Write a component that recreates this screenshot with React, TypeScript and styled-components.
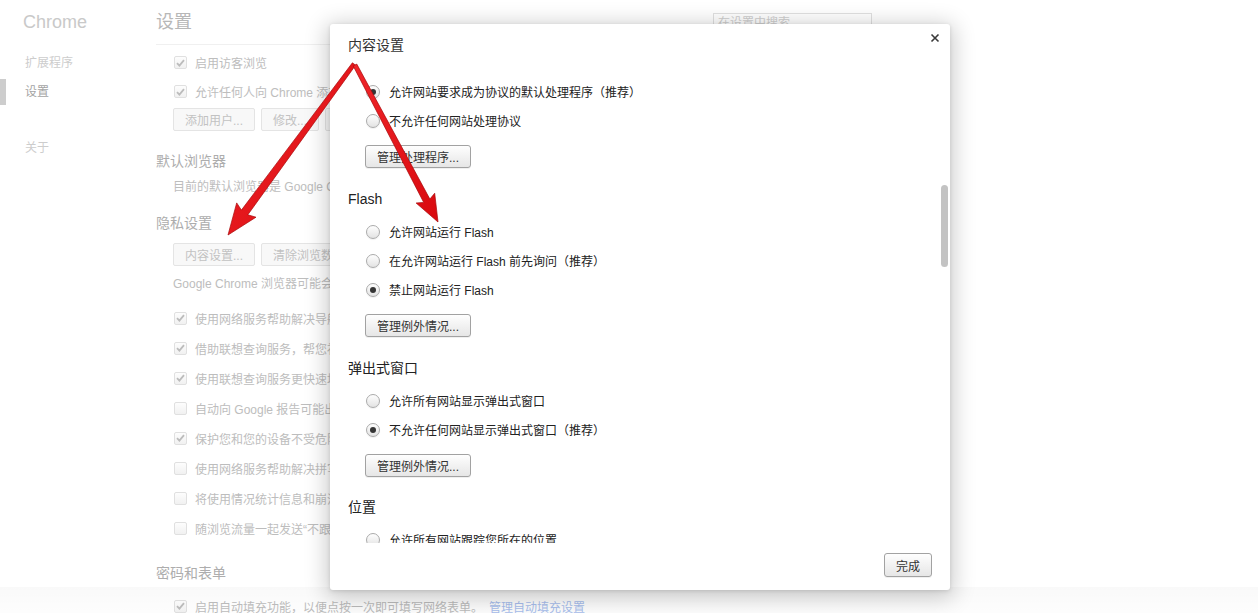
import React from "react";
import styled, { createGlobalStyle } from "styled-components";

const FONT = `"Liberation Sans", "Noto Sans CJK SC", sans-serif`;

const GlobalStyle = createGlobalStyle`
  html, body { margin: 0; padding: 0; background: #fff; }
  body { font-family: ${FONT}; overflow: hidden; }
  button { font-family: ${FONT}; }
`;

const Page = styled.div`
  position: relative;
  width: 1258px;
  height: 613px;
  overflow: hidden;
  display: flex;
  background: #fff;
`;

/* ---------- sidebar ---------- */
const Sidebar = styled.nav`
  width: 156px;
  flex: none;
  display: flex;
  flex-direction: column;
`;

const Brand = styled.div`
  height: 44px;
  line-height: 44px;
  padding-left: 23px;
  font-size: 18px;
  color: #c9c9c9;
`;

const NavItem = styled.div<{ $active?: boolean; $mt: number }>`
  height: 26px;
  line-height: 26px;
  margin-top: ${(p) => p.$mt}px;
  padding-left: 19px;
  border-left: 6px solid ${(p) => (p.$active ? "#cdcdcd" : "transparent")};
  font-size: 12px;
  color: ${(p) => (p.$active ? "#a4a4a4" : "#cdcdcd")};
`;

/* ---------- main settings page ---------- */
const Main = styled.main`
  width: 716px;
  flex: none;
  display: flex;
  flex-direction: column;
`;

const Header = styled.header`
  height: 44px;
  display: flex;
  align-items: flex-start;
  justify-content: space-between;
  border-bottom: 1px solid #f0f0f0;
`;

const PageTitle = styled.h1`
  margin: 0;
  font-size: 18px;
  font-weight: normal;
  line-height: 44px;
  color: #b7b7b7;
`;

const Search = styled.div`
  margin-top: 13px;
  width: 159px;
  height: 20px;
  box-sizing: border-box;
  border: 1px solid #e0e0e0;
  padding-left: 4px;
  font-size: 12px;
  line-height: 18px;
  color: #cfcfcf;
`;

const Heading = styled.h3<{ $mt: number }>`
  margin: ${(p) => p.$mt}px 0 0;
  height: 20px;
  line-height: 20px;
  font-size: 14px;
  font-weight: normal;
  color: #adadad;
  white-space: nowrap;
`;

const Body = styled.div<{ $mt: number; $flush?: boolean }>`
  margin-top: ${(p) => p.$mt}px;
  padding-left: ${(p) => (p.$flush ? 0 : 17)}px;
  display: flex;
  flex-direction: column;
  align-items: flex-start;
`;

const CheckRow = styled.div<{ $h: number }>`
  height: ${(p) => p.$h}px;
  display: flex;
  align-items: center;
  gap: 8px;
  font-size: 12px;
  color: #bdbdbd;
  white-space: nowrap;
`;

const Box = styled.span`
  width: 13px;
  height: 13px;
  box-sizing: border-box;
  margin-left: 1px;
  border: 1px solid #e0e0e0;
  border-radius: 2px;
  background: linear-gradient(#fdfdfd, #f1f1f1);
  display: flex;
  align-items: center;
  justify-content: center;
  flex: none;
`;

const Text = styled.div<{ $mt: number }>`
  margin-top: ${(p) => p.$mt}px;
  line-height: 20px;
  font-size: 12px;
  color: #bdbdbd;
  white-space: nowrap;
`;

const Link = styled.span`
  color: #a9bfee;
  margin-left: 6px;
`;

const ButtonRow = styled.div<{ $mt: number }>`
  margin-top: ${(p) => p.$mt}px;
  display: flex;
  gap: 6px;
`;

const BgButton = styled.button`
  height: 23px;
  padding: 0 11px;
  border: 1px solid #e4e4e4;
  border-radius: 2px;
  background: #f8f8f8;
  color: #c2c2c2;
  font-size: 12px;
  white-space: nowrap;
`;

/* ---------- dialog ---------- */
const Dialog = styled.section`
  position: absolute;
  left: 330px;
  top: 24px;
  width: 620px;
  height: 566px;
  background: #fff;
  border-radius: 3px;
  box-shadow: 0 4px 22px 4px rgba(0, 0, 0, 0.2), 0 1px 4px rgba(0, 0, 0, 0.12);
  display: flex;
  flex-direction: column;
  color: #333;
  z-index: 2;
`;

const DialogHeader = styled.div`
  height: 41px;
  flex: none;
  display: flex;
  justify-content: space-between;
  padding: 0 9px 0 18px;
`;

const DialogTitle = styled.h2`
  margin: 0;
  font-size: 14px;
  font-weight: normal;
  line-height: 42px;
  color: #333;
`;

const CloseButton = styled.button`
  margin-top: 8px;
  width: 12px;
  height: 12px;
  padding: 0;
  border: none;
  background: none;
  display: flex;
  align-items: center;
  justify-content: center;
`;

const DialogContent = styled.div`
  position: relative;
  height: 478px;
  flex: none;
  overflow: hidden;
`;

const ScrollInner = styled.div`
  margin-top: -21px;
  padding-left: 18px;
  display: flex;
  flex-direction: column;
`;

const SectionTitle = styled.h3<{ $mt: number }>`
  margin: ${(p) => p.$mt}px 0 0;
  height: 20px;
  line-height: 20px;
  font-size: 14px;
  font-weight: normal;
  color: #222;
`;

const RadioList = styled.div<{ $mt?: number }>`
  margin-top: ${(p) => p.$mt ?? 8}px;
  padding-left: 18px;
  display: flex;
  flex-direction: column;
`;

const RadioRow = styled.label`
  height: 29px;
  display: flex;
  align-items: center;
  gap: 9px;
  font-size: 12px;
  color: #222;
  white-space: nowrap;
`;

const Radio = styled.span<{ $checked?: boolean }>`
  width: 14px;
  height: 14px;
  box-sizing: border-box;
  border-radius: 50%;
  border: 1px solid #ababab;
  background: linear-gradient(#fefefe, #e3e3e3);
  box-shadow: 0 1px 1px rgba(0, 0, 0, 0.06);
  display: flex;
  align-items: center;
  justify-content: center;
  flex: none;
  &::after {
    content: "";
    width: 6px;
    height: 6px;
    border-radius: 50%;
    background: #353535;
    display: ${(p) => (p.$checked ? "block" : "none")};
  }
`;

const DlgButton = styled.button<{ $indent?: boolean }>`
  align-self: flex-start;
  margin: ${(p) => (p.$indent ? "10px 0 0 17px" : "0")};
  height: 23px;
  padding: 0 11px;
  border: 1px solid #a2a2a2;
  border-radius: 3px;
  background: linear-gradient(#fefefe, #e6e6e6);
  box-shadow: 0 1px 0 rgba(0, 0, 0, 0.06);
  color: #333;
  font-size: 12px;
  white-space: nowrap;
`;

const Scrollbar = styled.div`
  position: absolute;
  right: 2px;
  top: 120px;
  width: 7px;
  height: 82px;
  border-radius: 4px;
  background: #c3c3c3;
`;

const DialogFooter = styled.div`
  flex: 1;
  display: flex;
  justify-content: flex-end;
  align-items: flex-start;
  padding: 10px 18px 0 0;
`;

const DoneButton = styled(DlgButton)`
  height: 24px;
`;

/* ---------- overlays ---------- */
const BottomShade = styled.div`
  position: absolute;
  left: 0;
  right: 0;
  bottom: 0;
  height: 26px;
  background: linear-gradient(rgba(0, 0, 0, 0.025), rgba(0, 0, 0, 0.008));
  pointer-events: none;
  z-index: 1;
`;

const ArrowLayer = styled.svg`
  position: absolute;
  left: 0;
  top: 0;
  pointer-events: none;
  z-index: 3;
`;

type Pt = [number, number];
function arrowPoints(
  tail: Pt,
  tip: Pt,
  tailW: number,
  shaftW: number,
  headLen: number,
  headW: number
): string {
  const dx = tip[0] - tail[0];
  const dy = tip[1] - tail[1];
  const L = Math.hypot(dx, dy);
  const ux = dx / L;
  const uy = dy / L;
  const nx = -uy;
  const ny = ux;
  const bx = tip[0] - ux * headLen;
  const by = tip[1] - uy * headLen;
  const pts: Pt[] = [
    [tail[0] + (nx * tailW) / 2, tail[1] + (ny * tailW) / 2],
    [bx + (nx * shaftW) / 2, by + (ny * shaftW) / 2],
    [bx + (nx * headW) / 2 - ux * 3, by + (ny * headW) / 2 - uy * 3],
    tip,
    [bx - (nx * headW) / 2 - ux * 3, by - (ny * headW) / 2 - uy * 3],
    [bx - (nx * shaftW) / 2, by - (ny * shaftW) / 2],
    [tail[0] - (nx * tailW) / 2, tail[1] - (ny * tailW) / 2],
  ];
  return pts.map((p) => `${p[0].toFixed(1)},${p[1].toFixed(1)}`).join(" ");
}

const Check = () => (
  <svg width="9" height="8" viewBox="0 0 9 8">
    <path d="M1 4.2 L3.4 6.6 L8 1.2" fill="none" stroke="#bcbcbc" strokeWidth="1.8" />
  </svg>
);

const CheckItem = ({ checked, children }: { checked?: boolean; children: React.ReactNode }) => (
  <CheckRow $h={30}>
    <Box>{checked && <Check />}</Box>
    <span>{children}</span>
  </CheckRow>
);

const RadioItem = ({ checked, children }: { checked?: boolean; children: React.ReactNode }) => (
  <RadioRow>
    <Radio $checked={checked} />
    <span>{children}</span>
  </RadioRow>
);

const privacyChecks: [boolean, string][] = [
  [true, "使用网络服务帮助解决导航错误"],
  [true, "借助联想查询服务，帮您补全在地址栏中输入的搜索字词和网址"],
  [true, "使用联想查询服务更快速地加载网页"],
  [false, "自动向 Google 报告可能出现的安全事件的详细信息"],
  [true, "保护您和您的设备不受危险网站的侵害"],
  [false, "使用网络服务帮助解决拼写错误"],
  [false, "将使用情况统计信息和崩溃报告自动发送给 Google"],
  [false, "随浏览流量一起发送“不跟踪”请求"],
];

export default function App() {
  return (
    <>
      <GlobalStyle />
      <Page>
        <Sidebar>
          <Brand>Chrome</Brand>
          <NavItem $mt={6}>扩展程序</NavItem>
          <NavItem $mt={3} $active>
            设置
          </NavItem>
          <NavItem $mt={30}>关于</NavItem>
        </Sidebar>

        <Main>
          <Header>
            <PageTitle>设置</PageTitle>
            <Search>在设置中搜索</Search>
          </Header>

          <Body $mt={3}>
            <CheckRow $h={29}>
              <Box>
                <Check />
              </Box>
              <span>启用访客浏览</span>
            </CheckRow>
            <CheckRow $h={29}>
              <Box>
                <Check />
              </Box>
              <span>允许任何人向 Chrome 添加用户</span>
            </CheckRow>
            <ButtonRow $mt={2}>
              <BgButton>添加用户...</BgButton>
              <BgButton>修改...</BgButton>
              <BgButton>删除...</BgButton>
            </ButtonRow>
          </Body>

          <Heading $mt={20}>默认浏览器</Heading>
          <Body $mt={6}>
            <Text $mt={0}>目前的默认浏览器是 Google Chrome。</Text>
          </Body>

          <Heading $mt={16}>隐私设置</Heading>
          <Body $mt={10}>
            <ButtonRow $mt={0}>
              <BgButton>内容设置...</BgButton>
              <BgButton>清除浏览数据...</BgButton>
            </ButtonRow>
            <Text $mt={8}>Google Chrome 浏览器可能会使用网络服务改善您的浏览体验。</Text>
            <Body $mt={9} $flush>
              {privacyChecks.map(([c, t]) => (
                <CheckItem key={t} checked={c}>
                  {t}
                </CheckItem>
              ))}
            </Body>
          </Body>

          <Heading $mt={20}>密码和表单</Heading>
          <Body $mt={8}>
            <CheckItem checked>
              启用自动填充功能，以便点按一次即可填写网络表单。
              <Link>管理自动填充设置</Link>
            </CheckItem>
          </Body>
        </Main>

        <BottomShade />

        <Dialog>
          <DialogHeader>
            <DialogTitle>内容设置</DialogTitle>
            <CloseButton aria-label="关闭">
              <svg width="10" height="10" viewBox="0 0 10 10">
                <path d="M1.5 1.5 L8.5 8.5 M8.5 1.5 L1.5 8.5" stroke="#3a3a3a" strokeWidth="1.6" />
              </svg>
            </CloseButton>
          </DialogHeader>

          <DialogContent>
            <ScrollInner>
              <SectionTitle $mt={0}>处理程序</SectionTitle>
              <RadioList $mt={13}>
                <RadioItem checked>允许网站要求成为协议的默认处理程序（推荐）</RadioItem>
                <RadioItem>不允许任何网站处理协议</RadioItem>
              </RadioList>
              <DlgButton $indent>管理处理程序...</DlgButton>

              <SectionTitle $mt={21}>Flash</SectionTitle>
              <RadioList>
                <RadioItem>允许网站运行 Flash</RadioItem>
                <RadioItem>在允许网站运行 Flash 前先询问（推荐）</RadioItem>
                <RadioItem checked>禁止网站运行 Flash</RadioItem>
              </RadioList>
              <DlgButton $indent>管理例外情况...</DlgButton>

              <SectionTitle $mt={21}>弹出式窗口</SectionTitle>
              <RadioList>
                <RadioItem>允许所有网站显示弹出式窗口</RadioItem>
                <RadioItem checked>不允许任何网站显示弹出式窗口（推荐）</RadioItem>
              </RadioList>
              <DlgButton $indent>管理例外情况...</DlgButton>

              <SectionTitle $mt={20}>位置</SectionTitle>
              <RadioList>
                <RadioItem>允许所有网站跟踪您所在的位置</RadioItem>
                <RadioItem checked>当网站试图跟踪您所在的位置时询问您（推荐）</RadioItem>
              </RadioList>
            </ScrollInner>
            <Scrollbar />
          </DialogContent>

          <DialogFooter>
            <DoneButton>完成</DoneButton>
          </DialogFooter>
        </Dialog>

        <ArrowLayer width="1258" height="613" viewBox="0 0 1258 613">
          <defs>
            <linearGradient id="arrowRed" x1="0" y1="0" x2="1" y2="1">
              <stop offset="0" stopColor="#f0262a" />
              <stop offset="1" stopColor="#d9090e" />
            </linearGradient>
          </defs>
          <polygon
            points={arrowPoints([354, 64], [228, 235], 4, 8, 28, 24)}
            fill="url(#arrowRed)"
            stroke="#a80a0c"
            strokeWidth="0.7"
            strokeLinejoin="round"
          />
          <polygon
            points={arrowPoints([355, 65], [438, 222], 4, 7, 24, 21)}
            fill="url(#arrowRed)"
            stroke="#a80a0c"
            strokeWidth="0.7"
            strokeLinejoin="round"
          />
        </ArrowLayer>
      </Page>
    </>
  );
}
